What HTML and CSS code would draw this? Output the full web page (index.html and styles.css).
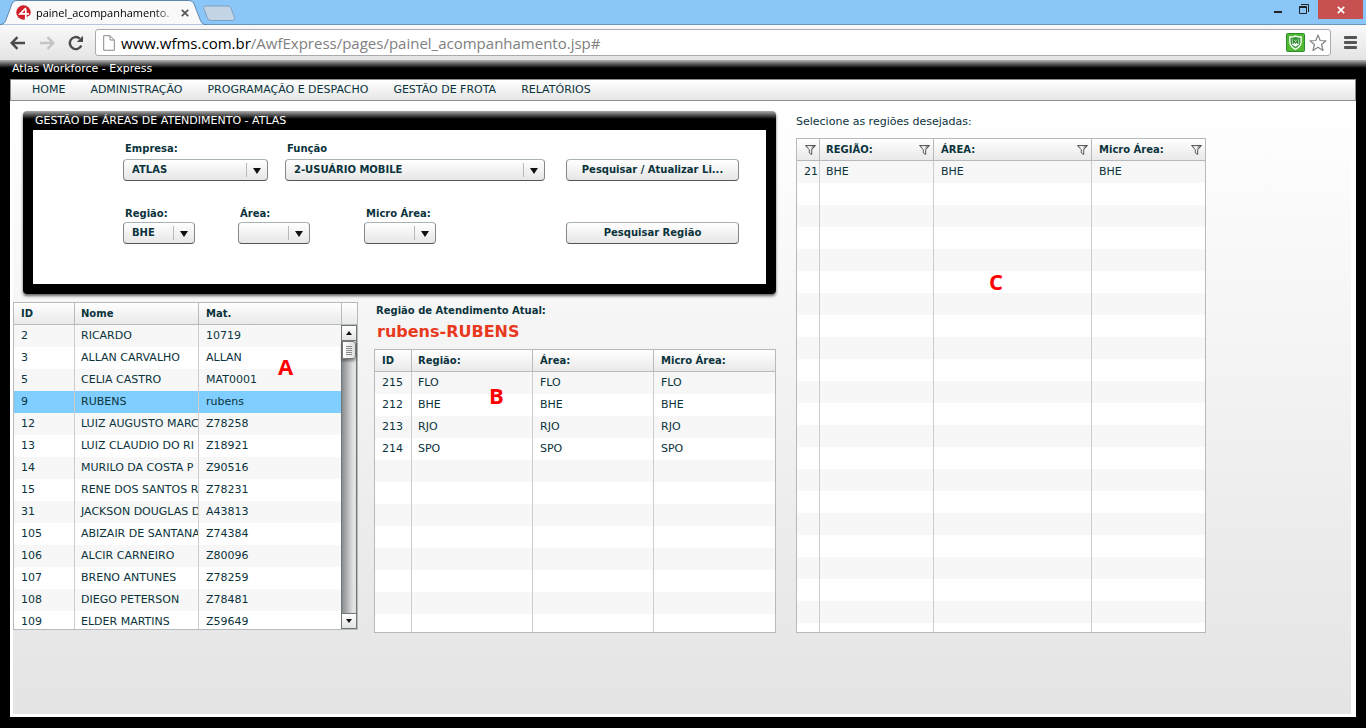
FILE: index.html
```html
<!DOCTYPE html>
<html lang="pt-BR">
<head>
<meta charset="utf-8">
<title>painel_acompanhamento.jsp</title>
<link rel="stylesheet" href="styles.css">
</head>
<body>
<header class="browser">
  <div class="tabstrip">
    <div class="tab">
      <svg class="tab-shape" viewBox="0 0 210 25" width="210" height="25" aria-hidden="true">
        <path d="M0 24.500C5 24.500 5.500 21 7 17L11.500 5C12.500 2 14 .5 17 .5H188C192 .5 193.500 2 194.500 5L199.500 18C201 22 202 24.500 206 24.500" fill="#f9f9f9" stroke="#5d87ae"/>
      </svg>
      <svg class="favicon" viewBox="0 0 16 16" width="16" height="16" aria-hidden="true">
        <circle cx="7.500" cy="7.500" r="7.200" fill="#cf2027"/>
        <path d="M9.800 3L4 8.800H13M9.800 4V13.500M9 14.200L15 10.500" fill="none" stroke="#fff" stroke-width="1.700"/>
      </svg>
      <span class="tab-title">painel_acompanhamento.</span>
      <button class="plain tab-close" aria-label="Fechar guia"><svg viewBox="0 0 8 8" width="8" height="8"><path d="M.8 .8L7.200 7.200M7.200 .8L.8 7.200" stroke="#555" stroke-width="1.700"/></svg></button>
    </div>
    <button class="plain new-tab" aria-label="Nova guia"><svg viewBox="0 0 34 17" width="34" height="17"><path d="M3.500 1H25C27.500 1 28.500 2 29.300 4L32.500 12.500C33 14.500 32 15.500 30 15.500H9.500C7 15.500 6 14.500 5.200 12.500L1.800 3.500C1.300 2 2 1 3.500 1Z" fill="#c3d5e5" stroke="#7d9fc0"/></svg></button>
    <div class="window-buttons">
      <button class="plain win" aria-label="Minimizar"><svg viewBox="0 0 12 12" width="12" height="12"><path d="M2 8H10" stroke="#222" stroke-width="2"/></svg></button>
      <button class="plain win" aria-label="Restaurar"><svg viewBox="0 0 12 12" width="12" height="12"><path d="M1.500 2.500H8.500V9.500H1.500Z M1 3.500H9M3 .5H10.500V8" fill="none" stroke="#222"/></svg></button>
      <button class="plain win-close" aria-label="Fechar"><svg viewBox="0 0 8 8" width="8" height="8"><path d="M.8 .8L7.200 7.200M7.200 .8L.8 7.200" stroke="#fff" stroke-width="1.700"/></svg></button>
    </div>
  </div>
  <div class="toolbar">
    <button class="plain" aria-label="Voltar"><svg viewBox="0 0 16 14" width="16" height="14"><path d="M1.500 7H15M7.500 1.200L1.700 7L7.500 12.800" fill="none" stroke="#4a4a4a" stroke-width="2.400"/></svg></button>
    <button class="plain" aria-label="Avançar"><svg viewBox="0 0 16 14" width="16" height="14"><path d="M14.500 7H1M8.500 1.200L14.300 7L8.500 12.800" fill="none" stroke="#c4c4c4" stroke-width="2.400"/></svg></button>
    <button class="plain" aria-label="Recarregar"><svg viewBox="0 0 16 16" width="16" height="16"><path d="M13.300 10.500A6 6 0 1 1 11.800 3.600" fill="none" stroke="#4a4a4a" stroke-width="2.400"/><path d="M15 .8V7H8.800Z" fill="#4a4a4a"/></svg></button>
    <div class="omnibox">
      <svg viewBox="0 0 12 16" width="12" height="16" aria-hidden="true"><path d="M.7 .7H7L11.300 5V15.300H.7ZM7 .7V5H11.300" fill="#fff" stroke="#8a8a8a"/></svg>
      <a class="url" href="#">www.wfms.com.br<span class="path">/AwfExpress/pages/painel_acompanhamento.jsp#</span></a>
      <svg viewBox="0 0 19 19" width="19" height="19" aria-hidden="true"><rect x=".5" y=".5" width="18" height="18" rx="1" fill="#4fb92f" stroke="#2c8a2f"/><path d="M9.500 2.200C11.500 3.300 13.500 3.500 15.800 3.300V9C15.800 12.500 13 15.300 9.500 17C6 15.300 3.200 12.500 3.200 9V3.300C5.500 3.500 7.500 3.300 9.500 2.200Z" fill="#fff"/><path d="M9.500 3.800C11.200 4.500 12.800 4.800 14.500 4.700V9C14.500 12 12.300 14.100 9.500 15.500C6.700 14.100 4.500 12 4.500 9V4.700C6.200 4.800 7.800 4.500 9.500 3.800Z" fill="#3c9a3c"/><path d="M6 6L9.500 8L13 6V11.500L9.500 13.800L6 11.500Z" fill="#fff"/><path d="M7.200 11V7.500L9.500 10L11.800 7.500V11" fill="none" stroke="#2c8a2f" stroke-width="1.300"/></svg>
      <button class="plain" aria-label="Favoritar"><svg viewBox="0 0 18 18" width="18" height="18"><path d="M9 1L11.200 6.500L17 6.800L12.600 10.500L14 16.500L9 13.200L4 16.500L5.400 10.500L1 6.800L6.800 6.500Z" fill="#fff" stroke="#858585" stroke-width="1.200" stroke-linejoin="round"/></svg></button>
    </div>
    <button class="plain menu-button" aria-label="Menu"><svg viewBox="0 0 13 13" width="13" height="13"><path d="M1 1.500H12M1 6.500H12M1 11.500H12" stroke="#555" stroke-width="2.800" stroke-linecap="round"/></svg></button>
  </div>
</header>

<main class="app">
  <h1 class="app-title">Atlas Workforce - Express</h1>
  <nav class="menu">
    <a href="#">HOME</a><a href="#">ADMINISTRAÇÃO</a><a href="#">PROGRAMAÇÃO E DESPACHO</a><a href="#">GESTÃO DE FROTA</a><a href="#">RELATÓRIOS</a>
  </nav>
  <div class="content">
    <div class="left">
      <section class="panel">
        <h2 class="panel-title">GESTÃO DE ÁREAS DE ATENDIMENTO - ATLAS</h2>
        <form class="panel-body">
          <div class="form-row">
            <div class="field company"><label for="empresa">Empresa:</label><div class="combo"><select id="empresa"><option>ATLAS</option></select></div></div>
            <div class="field role"><label for="funcao">Função</label><div class="combo"><select id="funcao"><option>2-USUÁRIO MOBILE</option></select></div></div>
            <button class="button" type="button">Pesquisar / Atualizar Li...</button>
          </div>
          <div class="form-row second">
            <div class="field region"><label for="regiao">Região:</label><div class="combo"><select id="regiao"><option>BHE</option></select></div></div>
            <div class="field area"><label for="area">Área:</label><div class="combo"><select id="area"><option></option></select></div></div>
            <div class="field micro"><label for="micro">Micro Área:</label><div class="combo"><select id="micro"><option></option></select></div></div>
            <button class="button" type="button">Pesquisar Região</button>
          </div>
        </form>
      </section>
      <div class="lists">
        <section class="grid people">
          <div class="grid-view">
            <table>
              <colgroup><col class="w-id"><col class="w-name"><col></colgroup>
              <thead><tr><th>ID</th><th>Nome</th><th>Mat.</th></tr></thead>
              <tbody>
                <tr><td>2</td><td>RICARDO</td><td>10719</td></tr>
                <tr><td>3</td><td>ALLAN CARVALHO</td><td>ALLAN</td></tr>
                <tr><td>5</td><td>CELIA CASTRO</td><td>MAT0001</td></tr>
                <tr class="selected"><td>9</td><td>RUBENS</td><td>rubens</td></tr>
                <tr><td>12</td><td>LUIZ AUGUSTO MARC</td><td>Z78258</td></tr>
                <tr><td>13</td><td>LUIZ CLAUDIO DO RI</td><td>Z18921</td></tr>
                <tr><td>14</td><td>MURILO DA COSTA P</td><td>Z90516</td></tr>
                <tr><td>15</td><td>RENE DOS SANTOS R</td><td>Z78231</td></tr>
                <tr><td>31</td><td>JACKSON DOUGLAS D</td><td>A43813</td></tr>
                <tr><td>105</td><td>ABIZAIR DE SANTANA</td><td>Z74384</td></tr>
                <tr><td>106</td><td>ALCIR CARNEIRO</td><td>Z80096</td></tr>
                <tr><td>107</td><td>BRENO ANTUNES</td><td>Z78259</td></tr>
                <tr><td>108</td><td>DIEGO PETERSON</td><td>Z78481</td></tr>
                <tr><td>109</td><td>ELDER MARTINS</td><td>Z59649</td></tr>
              </tbody>
            </table>
          </div>
          <div class="scroll">
            <div class="scroll-head"></div>
            <button class="scroll-btn up" aria-label="Rolar para cima"></button>
            <div class="track"><div class="thumb"></div></div>
            <button class="scroll-btn down" aria-label="Rolar para baixo"></button>
          </div>
          <span class="mark mark-a">A</span>
        </section>
        <section class="current">
          <h3 class="current-label">Região de Atendimento Atual:</h3>
          <p class="current-name">rubens-RUBENS</p>
          <div class="grid regions">
            <div class="grid-view">
              <table>
                <colgroup><col class="w-code"><col class="w-region"><col class="w-region"><col></colgroup>
                <thead><tr><th>ID</th><th>Região:</th><th>Área:</th><th>Micro Área:</th></tr></thead>
                <tbody>
                  <tr><td>215</td><td>FLO</td><td>FLO</td><td>FLO</td></tr>
                  <tr><td>212</td><td>BHE</td><td>BHE</td><td>BHE</td></tr>
                  <tr><td>213</td><td>RJO</td><td>RJO</td><td>RJO</td></tr>
                  <tr><td>214</td><td>SPO</td><td>SPO</td><td>SPO</td></tr>
                  <tr class="filler"><td></td><td></td><td></td><td></td></tr>
                </tbody>
              </table>
            </div>
            <span class="mark mark-b">B</span>
          </div>
        </section>
      </div>
    </div>
    <section class="picker">
      <svg class="defs" width="0" height="0" aria-hidden="true"><defs>
        <linearGradient id="metal" x1="0" x2="1" y1="0" y2="0"><stop offset="0" stop-color="#999"/><stop offset=".45" stop-color="#fff"/><stop offset="1" stop-color="#333"/></linearGradient>
        <symbol id="funnel" viewBox="0 0 11 10"><path d="M.5 .5H10.500L6.700 4.800V9.500L4.300 8V4.800Z" fill="url(#metal)" stroke="#3c3c3c" stroke-width=".8"/></symbol>
      </defs></svg>
      <p class="picker-label">Selecione as regiões desejadas:</p>
      <div class="grid choices">
        <div class="grid-view">
          <table>
            <colgroup><col class="w-check"><col class="w-c1"><col class="w-c2"><col></colgroup>
            <thead><tr>
              <th><div class="th-filter"><span></span><svg width="11" height="10"><use href="#funnel"/></svg></div></th>
              <th><div class="th-filter"><span>REGIÃO:</span><svg width="11" height="10"><use href="#funnel"/></svg></div></th>
              <th><div class="th-filter"><span>ÁREA:</span><svg width="11" height="10"><use href="#funnel"/></svg></div></th>
              <th><div class="th-filter"><span>Micro Área:</span><svg width="11" height="10"><use href="#funnel"/></svg></div></th>
            </tr></thead>
            <tbody>
              <tr><td>21</td><td>BHE</td><td>BHE</td><td>BHE</td></tr>
              <tr class="filler"><td></td><td></td><td></td><td></td></tr>
            </tbody>
          </table>
        </div>
        <span class="mark mark-c">C</span>
      </div>
    </section>
  </div>
</main>
</body>
</html>
```

FILE: styles.css
```css
* { box-sizing: border-box; }
body {
  margin: 0;
  min-height: 100vh;
  display: flex;
  flex-direction: column;
  font: 11px/12px "DejaVu Sans", Verdana, sans-serif;
  color: #0b333c;
  background: #000;
}
h1, h2, h3, p { margin: 0; }
button, select { font: inherit; color: inherit; }
a { color: inherit; text-decoration: none; }
svg { display: block; flex: none; }
.plain { border: 0; padding: 0; background: none; }

/* browser window */
.browser { font-family: "Open Sans", "Noto Sans", sans-serif; color: #000; }
.tabstrip {
  display: flex;
  align-items: flex-start;
  height: 25px;
  background: #8bc6f9;
  border-bottom: 1px solid #6a94bd;
}
.tab {
  position: relative;
  display: flex;
  align-items: center;
  width: 202px;
  height: 25px;
  padding: 1px 0 0 16px;
}
.tab-shape { position: absolute; left: 0; top: 0; }
.favicon, .tab-title, .tab-close { position: relative; }
.tab-title {
  flex: none;
  width: 138px;
  margin-left: 4px;
  font-size: 11px;
  line-height: 16px;
  white-space: nowrap;
  -webkit-mask-image: linear-gradient(90deg, #000 85%, transparent 105%);
  mask-image: linear-gradient(90deg, #000 85%, transparent 105%);
}
.tab-close { margin-left: 7px; }
.new-tab { margin-top: 5px; }
.window-buttons { display: flex; align-items: flex-start; margin-left: auto; padding-right: 3px; }
.win { padding: 4px 0 0; margin-right: 14px; }
.win + .win { margin-right: 8px; }
.win-close {
  display: flex;
  align-items: center;
  justify-content: center;
  width: 45px;
  height: 19px;
  background: #c75050;
}
.toolbar {
  display: flex;
  align-items: center;
  gap: 13px;
  height: 35px;
  padding: 0 9px 0 10px;
  background: linear-gradient(#f9f9f9, #e4e4e4);
}
.omnibox {
  flex: 1;
  display: flex;
  align-items: center;
  gap: 4px;
  height: 27px;
  margin-left: -2px;
  padding: 0 3px 0 7px;
  background: #fff;
  border: 1px solid #aaa;
  border-radius: 3px;
}
.url { flex: 1; margin-left: 2px; font-size: 15px; line-height: 22px; white-space: nowrap; }
.path { color: #808080; }

/* application frame */
.app {
  flex: 1;
  display: flex;
  flex-direction: column;
  padding: 0 10px 11px;
  background: linear-gradient(#b4b4b4, #000 8px);
}
.app-title { padding: 3px 2px 4px; font-size: 11px; line-height: 12px; font-weight: 400; color: #fff; }
.menu {
  display: flex;
  align-items: center;
  gap: 25px;
  height: 22px;
  padding: 0 21px;
  background: linear-gradient(#fff, #e6e6e6);
  border: 1px solid #8a8e91;
}
.content {
  flex: 1;
  display: grid;
  grid-template-columns: 763fr 410fr 125fr;
  column-gap: 20px;
  align-items: start;
  padding-top: 10px;
  background: linear-gradient(#fff, #e4e4e4);
  border: solid #fff;
  border-width: 0 5px 3px 3px;
}

/* search panel */
.panel {
  margin-left: 10px;
  padding: 0 10px 10px;
  border-radius: 4px;
  background: linear-gradient(#aaa, #000 8px);
  box-shadow: 0 2px 3px rgba(0, 0, 0, .6);
}
.panel-title { padding: 4px 2px 3px; font-size: 11px; line-height: 12px; font-weight: 400; color: #fff; }
.panel-body { padding: 13px 27px 40px 90px; background: #fff; }
.form-row { display: flex; align-items: flex-end; }
.second { margin-top: 27px; }
.field label { display: block; padding-left: 2px; margin-bottom: 4px; font-size: 10px; font-weight: 700; }
.second label { margin-bottom: 2px; }
.company { width: 145px; margin-right: 17px; }
.role { width: 260px; }
.region { width: 115px; }
.area { width: 126px; }
.combo { position: relative; }
.second .combo { width: 72px; }
.combo select, .button {
  display: block;
  width: 100%;
  height: 22px;
  border: 1px solid #888;
  border-color: #aab3b3 #848888 #555;
  border-radius: 4px;
  background: linear-gradient(#fff, #e6e6e6);
  font-size: 10px;
  font-weight: 700;
  line-height: 18px;
}
.combo select { appearance: none; padding: 0 24px 0 8px; }
.combo::before {
  content: "";
  position: absolute;
  right: 21px;
  top: 4px;
  height: 14px;
  border-left: 1px solid #b7babc;
}
.combo::after {
  content: "";
  position: absolute;
  right: 7px;
  top: 9px;
  border: solid transparent;
  border-width: 6px 4px 0;
  border-top-color: #111;
  pointer-events: none;
}
.button { width: 173px; margin-left: auto; padding: 0; }

/* data grids */
.lists {
  display: grid;
  grid-template-columns: 345fr 402fr;
  column-gap: 16px;
  align-items: start;
  margin-top: 8px;
}
.grid {
  position: relative;
  display: flex;
  border: 1px solid #b7babc;
  background: repeating-linear-gradient(#fff 0 22px, #f7f7f7 22px 44px);
}
.grid-view { flex: 1; overflow: hidden; }
.grid table { width: 100%; height: 100%; table-layout: fixed; border-spacing: 0; }
.grid th, .grid td {
  height: 22px;
  padding: 0 0 0 7px;
  overflow: hidden;
  text-align: left;
  white-space: nowrap;
  border-right: 1px solid #ccc;
}
.grid th {
  font-size: 10px;
  background: linear-gradient(#fff, #e9e9e9);
  border-right-color: #b7babc;
  border-bottom: 1px solid #b7babc;
}
.grid td:nth-child(2), .grid th:nth-child(2) { padding-left: 6px; }
.grid th:last-child, .grid td:last-child { border-right: 0; }
.grid .filler td { height: auto; }
.selected td { background: #7fceff; }
.people { height: 328px; }
.people .grid-view table { height: auto; }
.current { padding-top: 3px; }
.current-label { font-size: 10px; line-height: 12px; padding-left: 2px; }
.current-name { padding: 5px 3px 7px; font-size: 16px; line-height: 20px; font-weight: 700; color: #e8391f; }
.regions { height: 284px; }
.picker { padding-top: 5px; }
.defs { position: absolute; }
.picker-label { margin-bottom: 10px; }
.choices { height: 495px; }
.w-id { width: 61px; }
.w-name { width: 124px; }
.w-code { width: 37px; }
.w-region { width: 121px; }
.w-check { width: 23px; }
.w-c1 { width: 114px; }
.w-c2 { width: 158px; }
.th-filter { display: flex; align-items: center; justify-content: space-between; padding-right: 3px; }

/* scroll bar */
.scroll { display: flex; flex-direction: column; width: 16px; }
.scroll-head { height: 22px; background: linear-gradient(#fff, #e9e9e9); border: solid #b7babc; border-width: 0 0 1px 1px; }
.scroll-btn { position: relative; height: 16px; padding: 0; border: 1px solid #6f7777; background: linear-gradient(#fff, #e2e2e2); }
.scroll-btn::after { content: ""; position: absolute; left: 4px; top: 5px; border: solid transparent; border-width: 4px 3px 0; border-top-color: #111; }
.up::after { border-width: 0 3px 4px; border-bottom-color: #111; }
.track { flex: 1; border: solid #6f7777; border-width: 0 1px; background: linear-gradient(90deg, #858c8f, #e2e2e2 80%); }
.thumb {
  height: 18px;
  border: 1px solid #777;
  border-radius: 0 3px 3px 0;
  background: repeating-linear-gradient(#888 0 1px, transparent 1px 2px) center / 6px 9px no-repeat, linear-gradient(90deg, #fff, #ddd);
  box-shadow: 0 2px 3px rgba(0, 0, 0, .4);
}

/* callout letters */
.mark { position: absolute; font: 700 22px/24px "Open Sans", "Noto Sans", sans-serif; color: #f00; }
.mark-a { left: 264px; top: 51px; }
.mark-b { left: 114px; top: 33px; }
.mark-c { left: 192px; top: 130px; }
```
